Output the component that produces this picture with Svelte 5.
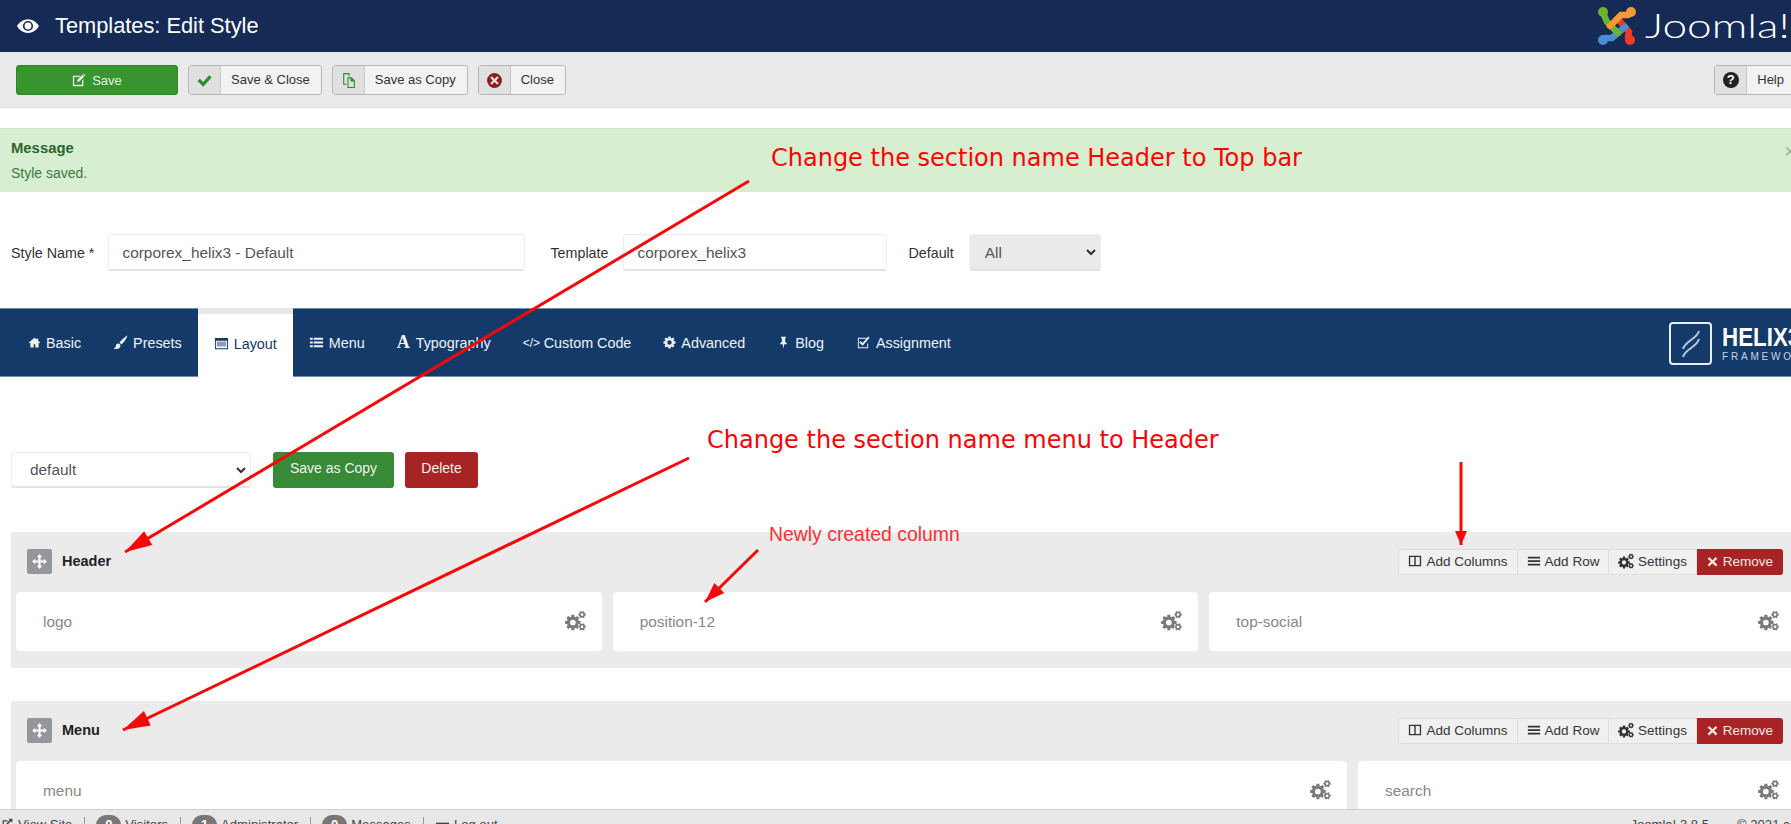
<script>
// cog outline for gear icons, hole cut out with evenodd
function cog(cx, cy, r, teeth = 8) {
  const pts = []
  const step = (Math.PI * 2) / teeth
  for (let i = 0; i < teeth; i++) {
    const a = i * step
    const w = step * 0.24
    const inner = r * 0.76
    pts.push([a - step / 2 + w * 0.6, inner], [a - w, r], [a + w, r], [a + step / 2 - w * 0.6, inner])
  }
  const outline = pts
    .map(([a, d], i) => `${i ? 'L' : 'M'}${(cx + Math.cos(a) * d).toFixed(2)} ${(cy + Math.sin(a) * d).toFixed(2)}`)
    .join('')
  const h = r * 0.36
  return `${outline}zM${cx - h} ${cy}a${h} ${h} 0 1 0 ${h * 2} 0a${h} ${h} 0 1 0 ${-h * 2} 0z`
}

const gears = cog(6, 9.5, 6) + cog(13, 3.5, 2.9, 6) + cog(13, 12.8, 2.9, 6)

const icons = {
  eye: 'M8 3C4 3 1 6 0 8c1 2 4 5 8 5s7-3 8-5c-1-2-4-5-8-5zM8 4.3a3.7 3.7 0 1 0 0 7.4 3.7 3.7 0 0 0 0-7.4zM8 5.5a2.5 2.5 0 1 1 0 5 2.5 2.5 0 0 1 0-5z',
  edit: 'M1 3h9L8.5 4.5h-6v9h9v-5L13 7v8H1zM6 8l6-6 2 2-6 6H6zM12.7 1.3l.8-.8 2 2-.8.8z',
  check: 'M1.5 8.5l2.2-2.2 3 3L12.5 3l2.2 2.2-8 8.6z',
  copy: 'M3 1h6v3H8V2H4v9h2v1H3zM7 5h4l3 3v7H7zM8 6v8h5V9h-3V6z',
  timesCircle: 'M8 1a7 7 0 1 0 0 14A7 7 0 0 0 8 1zM5.5 4L8 6.5 10.5 4 12 5.5 9.5 8 12 10.5 10.5 12 8 9.5 5.5 12 4 10.5 6.5 8 4 5.5z',
  home: 'M8 2L1 8l1 1 1-.8V14h4v-4h2v4h4V8.2l1 .8 1-1-2.5-2.1V3h-2v1.2z',
  brush: 'M15.5.5c-2 1-6.500 4.500-8.500 7.500l2 2c3-2 5.500-6.500 6.500-9.500zM6 9c-2 0-3 1-3 3 0 1-1 2-2.500 2 2 1.500 6.500 1.500 7.500-2 0-1-1-3-2-3z',
  layout: 'M1 2h14v12H1zM2 5v8h12V5zM3 6h10v1H3zM3 8h10v1H3zM3 10h10v1H3z',
  list: 'M1 3h3v2H1zM5 3h10v2H5zM1 7h3v2H1zM5 7h10v2H5zM1 11h3v2H1zM5 11h10v2H5z',
  cog: cog(8, 8, 7.5),
  pin: 'M5 1h6v1l-1 1v4l2 2v1H9l-1 5.500L7 10H4V9l2-2V3L5 2z',
  checkSquare: 'M2 3h9v1H3v9h9V9h1v5H2zM5 6.500l2 2 6-7 1.500 1.500L7 11.500 3.500 8z',
  move: 'M8 1l2.500 3H9v3h3V5.500L15 8l-3 2.500V9H9v3h1.500L8 15l-2.500-3H7V9H4v1.500L1 8l3-2.500V7h3V4H5.500z',
  columns: 'M1 2h14v12H1zM2.500 3.500v9h4.700v-9zM8.800 3.500v9h4.700v-9z',
  bars: 'M1 3h14v2H1zM1 7h14v2H1zM1 11h14v2H1z',
  gears,
  times: 'M4 2.500l4 4 4-4L14 4.500 10 8l4 4-2 2-4-4-4 4-2-2 4-4-4-3.500z',
  external: 'M2 4h6v1.500H3.500v7h7V9H12v5H2zM9 2h5v5l-1.800-1.800L8 9.400 6.600 8l4.200-4.200z',
  minus: 'M1 6h14v3H1z'
}

const toolbar = [
  { label: 'Save & Close', icon: 'check', cls: 'green-ic' },
  { label: 'Save as Copy', icon: 'copy', cls: 'green-ic' },
  { label: 'Close', icon: 'timesCircle', cls: 'red-ic' }
]

const tabs = [
  { label: 'Basic', icon: 'home', size: 13 },
  { label: 'Presets', icon: 'brush', size: 15 },
  { label: 'Layout', icon: 'layout', size: 15, active: true },
  { label: 'Menu', icon: 'list', size: 15 },
  { label: 'Typography', glyph: 'A' },
  { label: 'Custom Code', glyph: '</>' },
  { label: 'Advanced', icon: 'cog', size: 13 },
  { label: 'Blog', icon: 'pin', size: 13 },
  { label: 'Assignment', icon: 'checkSquare', size: 15 }
]

const sections = [
  { title: 'Header', grid: 'thirds', cols: [{ name: 'logo' }, { name: 'position-12' }, { name: 'top-social' }] },
  { title: 'Menu', grid: 'wide', cols: [{ name: 'menu' }, { name: 'search' }] }
]

const arrows = [
  { x1: 749, y1: 181, x2: 125, y2: 552, len: 27, half: 8 },
  { x1: 689, y1: 458, x2: 123, y2: 730, len: 27, half: 8 },
  { x1: 1461, y1: 462, x2: 1461, y2: 545, len: 14, half: 6 },
  { x1: 758, y1: 550, x2: 705, y2: 602, len: 20, half: 7 }
]

function head(a) {
  const dx = a.x2 - a.x1
  const dy = a.y2 - a.y1
  const l = Math.hypot(dx, dy)
  const ux = dx / l
  const uy = dy / l
  const bx = a.x2 - ux * a.len
  const by = a.y2 - uy * a.len
  return `${a.x2},${a.y2} ${bx - uy * a.half},${by + ux * a.half} ${bx + uy * a.half},${by - ux * a.half}`
}
</script>

{#snippet icon(name, size = 16)}
  <svg class="icon" width={size} height={size} viewBox="0 0 16 16"><path fill="currentColor" fill-rule="evenodd" d={icons[name]} /></svg>
{/snippet}

<div class="page">
  <header class="topbar">
    <span class="eye">{@render icon('eye', 22)}</span>
    <h1>Templates: Edit Style</h1>
    <div class="joomla">
      <svg width="40" height="40" viewBox="0 0 40 40" fill="none" stroke-width="6.500" stroke-linecap="round">
        <path stroke="#ef3a24" d="M21 13l11 13-1 5" />
        <circle cx="33" cy="34" r="5" fill="#ef3a24" />
        <path stroke="#4a8ed2" d="M28 21L15 32H9" />
        <circle cx="6" cy="34" r="5" fill="#4a8ed2" />
        <path stroke="#6cb42e" d="M7 9l3 7 11 11" />
        <circle cx="6" cy="6" r="5" fill="#6cb42e" />
        <path stroke="#f39a30" d="M13 20L24 9h7" />
        <circle cx="34" cy="6" r="5" fill="#f39a30" />
      </svg>
      <span class="wordmark">Joomla!</span>
    </div>
  </header>

  <div class="toolbar">
    <button class="btn-save">{@render icon('edit', 14)} Save</button>
    {#each toolbar as b}
      <button class="btn-tool">
        <span class="seg {b.cls}">{@render icon(b.icon, 17)}</span>
        <span class="lbl">{b.label}</span>
      </button>
    {/each}
    <button class="btn-tool help">
      <span class="seg"><span class="qmark">?</span></span>
      <span class="lbl">Help</span>
    </button>
  </div>

  <main class="content">
    <div class="message">
      <strong>Message</strong>
      <span>Style saved.</span>
      <span class="close-x">×</span>
    </div>

    <form class="style-form">
      <label class="f1" for="style-name">Style Name *</label>
      <input id="style-name" class="inp name" value="corporex_helix3 - Default" />
      <label class="f2" for="tpl">Template</label>
      <input id="tpl" class="inp tpl" value="corporex_helix3" />
      <label class="f3" for="dflt">Default</label>
      <span class="sel-wrap all">
        <select id="dflt"><option>All</option></select>
        <svg class="chev" width="10" height="7" viewBox="0 0 10 7"><path d="M1 1l4 4 4-4" fill="none" stroke="#333" stroke-width="2" /></svg>
      </span>
    </form>

    <nav class="tabs">
      {#each tabs as t}
        <a class="tab" class:active={t.active} href="#tab">
          {#if t.glyph === 'A'}
            <span class="glyph-a">A</span>
          {:else if t.glyph}
            <span class="glyph-code">{t.glyph}</span>
          {:else}
            {@render icon(t.icon, t.size)}
          {/if}
          {t.label}
        </a>
      {/each}
      <div class="helix">
        <span class="helix-box">
          <svg width="24" height="30" viewBox="0 0 24 30" fill="none" stroke="#b9c8dc" stroke-width="2"><path d="M20 2C18 10 6 12 4 20" /><path d="M20 10C18 18 6 20 4 28" /></svg>
        </span>
        <span class="helix-text"><b>HELIX3</b><small>FRAMEWORK</small></span>
      </div>
    </nav>

    <div class="layout-controls">
      <span class="sel-wrap layouts">
        <select><option>default</option></select>
        <svg class="chev" width="10" height="7" viewBox="0 0 10 7"><path d="M1 1l4 4 4-4" fill="none" stroke="#333" stroke-width="2" /></svg>
      </span>
      <button class="btn-flat ok">Save as Copy</button>
      <button class="btn-flat danger">Delete</button>
    </div>

    {#each sections as s}
      <section class="row">
        <div class="row-head">
          <span class="handle">{@render icon('move', 17)}</span>
          <b class="row-title">{s.title}</b>
          <div class="row-actions">
            <span class="act a1">{@render icon('columns', 14)} Add Columns</span>
            <span class="act a2">{@render icon('bars', 14)} Add Row</span>
            <span class="act a3">{@render icon('gears', 16)} Settings</span>
            <span class="act remove">{@render icon('times', 13)} Remove</span>
          </div>
        </div>
        <div class="cols {s.grid}">
          {#each s.cols as c}
            <div class="col">
              <span>{c.name}</span>
              <span class="col-gear">{@render icon('gears', 21)}</span>
            </div>
          {/each}
        </div>
      </section>
    {/each}
  </main>

  <footer class="status">
    <span class="st first">{@render icon('external', 13)} View Site</span>
    <span class="st"><i class="badge">0</i> Visitors</span>
    <span class="st"><i class="badge">1</i> Administrator</span>
    <span class="st"><i class="badge">0</i> Messages</span>
    <span class="st last">{@render icon('minus', 15)} Log out</span>
    <span class="version">Joomla! 3.8.5</span>
    <span class="copy">© 2021 corporex</span>
  </footer>

  <!-- annotations drawn on top of the screenshot -->
  <svg class="arrows" width="1791" height="824">
    {#each arrows as a}
      <line x1={a.x1} y1={a.y1} x2={a.x2} y2={a.y2} stroke="#f70808" stroke-width="3" />
      <polygon points={head(a)} fill="#f70808" />
    {/each}
  </svg>
  <div class="note n1">Change the section name Header to Top bar</div>
  <div class="note n2">Change the section name menu to Header</div>
  <div class="note n3">Newly created column</div>
</div>

<style>
:global(body) {
  margin: 0;
  overflow: hidden;
  background: #fff;
}

.page {
  position: relative;
  width: 1791px;
  height: 824px;
  overflow: hidden;
  display: flex;
  flex-direction: column;
  font-family: 'Liberation Sans', Arial, sans-serif;
  color: #333;
}

.icon {
  display: inline-block;
  flex: none;
  vertical-align: -2px;
}

.topbar {
  flex: none;
  height: 52px;
  background: #152b55;
  color: #fff;
  display: flex;
  align-items: center;
  padding-left: 17px;
}

.eye {
  display: flex;
  margin-right: 16px;
}

h1 {
  margin: 0;
  font-size: 21.800px;
  font-weight: 400;
}

.joomla {
  flex: none;
  box-sizing: border-box;
  width: 194px;
  margin-left: auto;
  display: flex;
  align-items: center;
  gap: 8px;
}

.wordmark {
  font-family: Lato, 'Open Sans', sans-serif;
  font-weight: 300;
  font-size: 34px;
  line-height: 36px;
  margin-top: -3px;
  transform: scaleX(1.3);
  transform-origin: left;
}

.toolbar {
  flex: none;
  box-sizing: border-box;
  height: 56px;
  background: #eaeaea;
  border-bottom: 1px solid #dcdcdc;
  display: flex;
  align-items: flex-start;
  gap: 10px;
  padding: 13px 0 0 16px;
}

.toolbar button {
  font-family: inherit;
  font-size: 13px;
  height: 30px;
  padding: 0;
  border-radius: 3px;
}

.btn-save {
  width: 162px;
  background: #38942f;
  border: 1px solid #2f8528;
  display: flex;
  align-items: center;
  justify-content: center;
  gap: 6px;
  color: #e6f3e4;
}

.btn-tool {
  display: flex;
  align-items: stretch;
  background: #f2f2f2;
  border: 1px solid #b8b8b8;
  color: #333;
}

.seg {
  width: 31px;
  background: #e0e0e0;
  border-right: 1px solid #c8c8c8;
  display: flex;
  align-items: center;
  justify-content: center;
}

.green-ic {
  color: #2f8a2b;
}

.red-ic {
  color: #8f1d1d;
}

.lbl {
  padding: 0 11px 0 10px;
  line-height: 28px;
}

.help {
  margin-left: auto;
  margin-right: -5px;
}

.qmark {
  width: 16px;
  height: 16px;
  border-radius: 50%;
  background: #222;
  color: #fff;
  font-size: 13px;
  font-weight: 700;
  line-height: 16px;
  text-align: center;
}

.content {
  flex: 1;
  min-height: 0;
  overflow: hidden;
}

.message {
  position: relative;
  box-sizing: border-box;
  height: 64px;
  margin-top: 20px;
  padding: 11px 11px 0;
  background: #d8eed0;
  border-top: 1px solid #d0e6c8;
  color: #3b7a3e;
  font-size: 14px;
  display: flex;
  flex-direction: column;
  gap: 9px;
}

.message strong {
  color: #2c662d;
  font-size: 14.850px;
}

.close-x {
  position: absolute;
  right: -5px;
  top: 11px;
  color: #9cb596;
  font-size: 20px;
}

.style-form {
  display: flex;
  align-items: center;
  height: 37px;
  margin: 42px 0 0 11px;
  font-size: 14.300px;
}

.inp,
.sel-wrap select {
  box-sizing: border-box;
  height: 37px;
  font-family: inherit;
  font-size: 15.400px;
  color: #555;
  background: #fff;
  border: 1px solid #eee;
  border-bottom: 2px solid #e4e4e4;
  border-radius: 3px;
  outline: none;
}

.inp {
  padding: 1px 13px 0;
}

.name {
  width: 417px;
  margin-left: 14px;
}

.f2 {
  margin-left: 25px;
}

.tpl {
  width: 264px;
  margin-left: 15px;
}

.f3 {
  margin-left: 21px;
}

.sel-wrap {
  position: relative;
  display: inline-block;
}

.sel-wrap select {
  width: 100%;
  appearance: none;
  padding: 0 15px;
  display: block;
}

.chev {
  position: absolute;
  right: 5px;
  top: 15px;
}

.all {
  width: 132px;
  margin-left: 15px;
}

.all select {
  background: #eaeaea;
}

.tabs {
  height: 69px;
  margin-top: 37px;
  background: #143a69;
  border-top: 1px solid #6f8fb0;
  border-bottom: 1px solid #6f8fb0;
  box-sizing: border-box;
  display: flex;
  align-items: stretch;
  padding-left: 12px;
  position: relative;
  font-size: 14.350px;
}

.tab {
  display: flex;
  align-items: center;
  gap: 5px;
  padding: 0 16px;
  color: #eef2f6;
  text-decoration: none;
}

.tab.active {
  color: #143a69;
  background: #fff;
  border-top: 6px solid #e8e8e8;
  margin: -1px 0;
  padding-bottom: 4px;
}

.glyph-a {
  width: 14px;
  font-family: 'Liberation Serif', serif;
  font-weight: 700;
  font-size: 18px;
}

.glyph-code {
  width: 16px;
  font-size: 12px;
  white-space: nowrap;
}

.helix {
  position: absolute;
  left: 1669px;
  top: 13px;
  display: flex;
  align-items: center;
  gap: 10px;
  color: #fff;
  white-space: nowrap;
}

.helix-box {
  box-sizing: border-box;
  width: 43px;
  height: 43px;
  border: 2px solid #e8edf3;
  border-radius: 4px;
  display: flex;
  align-items: center;
  justify-content: center;
}

.helix-text {
  display: flex;
  flex-direction: column;
  gap: 2px;
}

.helix-text b {
  font-size: 26px;
  line-height: 24px;
  transform: scaleX(0.86);
  transform-origin: left;
}

.helix-text small {
  font-size: 10px;
  line-height: 12px;
  letter-spacing: 2.800px;
  color: #c7d3e1;
}

.layout-controls {
  display: flex;
  align-items: stretch;
  height: 36px;
  margin: 75px 0 0 11px;
}

.layouts {
  width: 240px;
}

.layouts select {
  height: 36px;
  padding: 0 18px;
}

.btn-flat {
  border: 0;
  border-radius: 3px;
  color: #f1f1f1;
  font-family: inherit;
  font-size: 14px;
  padding: 0 0 4px;
}

.ok {
  width: 121px;
  margin-left: 22px;
  background: #388a36;
}

.danger {
  width: 73px;
  margin-left: 11px;
  background: #a82424;
}

.row {
  box-sizing: border-box;
  width: 1795px;
  margin: 44px 0 0 11px;
  height: 136px;
  background: #ebebeb;
  border-radius: 3px;
}

.row + .row {
  margin-top: 33px;
}

.row-head {
  box-sizing: border-box;
  width: 1772px;
  height: 60px;
  padding: 17px 0 0 16px;
  display: flex;
  align-items: flex-start;
}

.handle {
  width: 25px;
  height: 25px;
  border-radius: 2px;
  background: #95979d;
  color: #fff;
  display: flex;
  align-items: center;
  justify-content: center;
}

.row-title {
  margin-left: 10px;
  line-height: 25px;
  font-size: 14.500px;
  color: #222;
}

.row-actions {
  margin-left: auto;
  display: flex;
  font-size: 13.500px;
  color: #333;
}

.act {
  box-sizing: border-box;
  height: 26px;
  padding-bottom: 2px;
  display: flex;
  align-items: center;
  justify-content: center;
  gap: 4px;
  background: #f0f0f0;
  border: 1px solid #dedede;
  border-left: 0;
}

.a1 {
  width: 120px;
  border-left: 1px solid #dedede;
  border-radius: 3px 0 0 3px;
}

.a2 {
  width: 91px;
}

.a3 {
  width: 88px;
}

.remove {
  width: 86px;
  background: #a82424;
  border-color: #a82424;
  color: #f4e6e6;
  border-radius: 0 3px 3px 0;
}

.cols {
  display: grid;
  gap: 11px;
  width: 1779px;
  margin-left: 5px;
}

.thirds {
  grid-template-columns: repeat(3, 1fr);
}

.wide {
  grid-template-columns: 1331fr 437fr;
}

.col {
  box-sizing: border-box;
  height: 59px;
  background: #fff;
  border-radius: 4px;
  padding: 0 16px 0 27px;
  display: flex;
  align-items: center;
  justify-content: space-between;
  font-size: 15.400px;
  color: #888;
}

.col-gear {
  display: flex;
  color: #7a7a7a;
  margin-top: -2px;
}

.status {
  flex: none;
  box-sizing: border-box;
  height: 15px;
  overflow: hidden;
  background: #e8e8e8;
  border-top: 1px solid #cfcfcf;
  display: flex;
  align-items: flex-start;
  padding: 7px 0 0 1px;
  font-size: 13.100px;
  line-height: 16px;
  color: #444;
}

.st {
  display: inline-flex;
  align-items: flex-start;
  gap: 4px;
  height: 20px;
  padding: 0 12px 0 11px;
  border-right: 1px solid #999;
}

.first {
  padding-left: 0;
}

.last {
  border-right: 0;
}

.badge {
  width: 25px;
  height: 20px;
  margin-top: -2px;
  border-radius: 10px;
  background: #777;
  color: #fff;
  font-style: normal;
  font-weight: 700;
  text-align: center;
  line-height: 20px;
}

.version {
  margin-left: auto;
  white-space: nowrap;
}

.copy {
  flex: none;
  width: 54px;
  margin-left: 28px;
  white-space: nowrap;
}

.arrows {
  position: absolute;
  inset: 0;
  pointer-events: none;
}

.note {
  position: absolute;
  color: #f80404;
  white-space: nowrap;
}

.n1 {
  left: 771px;
  top: 144px;
  font-family: 'DejaVu Sans', Verdana, sans-serif;
  font-size: 24px;
}

.n2 {
  left: 707px;
  top: 426px;
  font-family: 'DejaVu Sans', Verdana, sans-serif;
  font-size: 24px;
}

.n3 {
  left: 769px;
  top: 523px;
  font-size: 19.400px;
  color: #f93030;
}
</style>
